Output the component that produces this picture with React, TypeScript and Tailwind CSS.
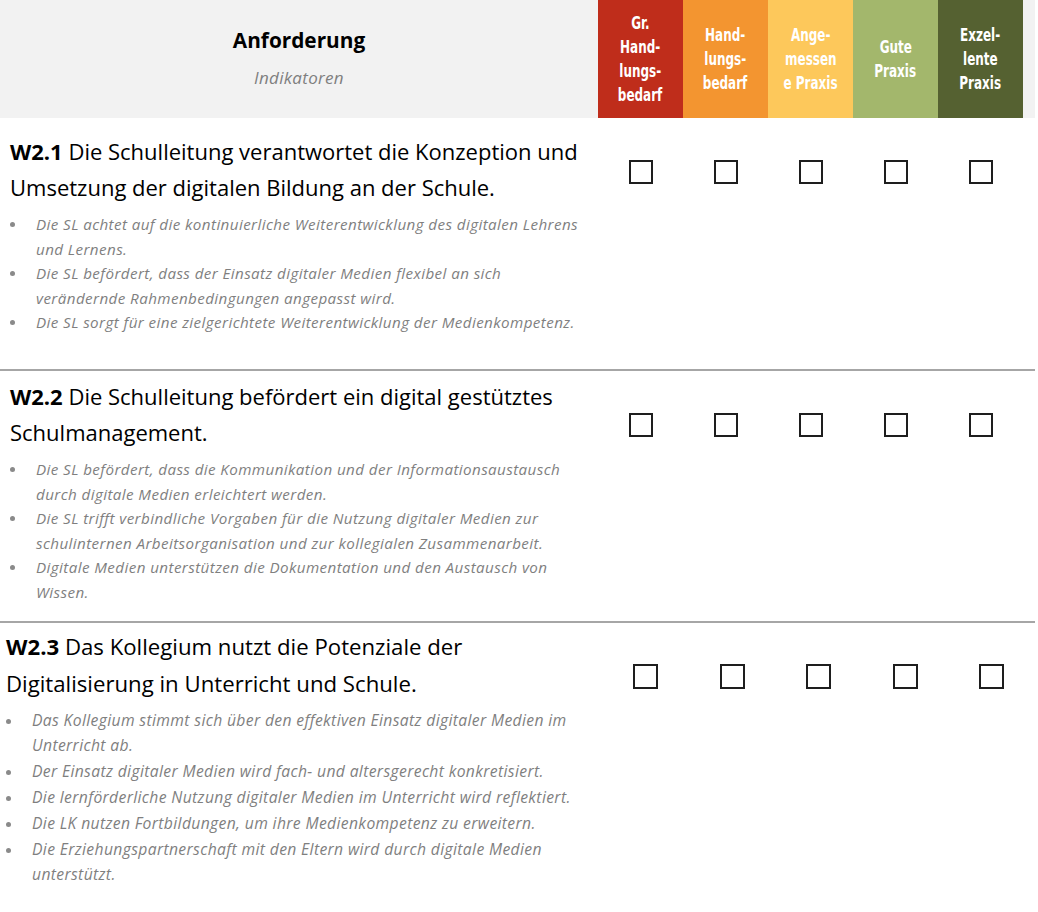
import React from "react";

type Row = {
  id: string;
  title: string[];
  items: string[][];
  variant: "a" | "b";
};

const ratings = [
  { lines: ["Gr.", "Hand-", "lungs-", "bedarf"], bg: "bg-[#bf2d1b]" },
  { lines: ["Hand-", "lungs-", "bedarf"], bg: "bg-[#f39530]" },
  { lines: ["Ange-", "messen", "e Praxis"], bg: "bg-[#fdc85b]" },
  { lines: ["Gute", "Praxis"], bg: "bg-[#a3b76c]" },
  { lines: ["Exzel-", "lente", "Praxis"], bg: "bg-[#556131]" },
];

const rows: Row[] = [
  {
    id: "W2.1",
    variant: "a",
    title: [
      "Die Schulleitung verantwortet die Konzeption und",
      "Umsetzung der digitalen Bildung an der Schule.",
    ],
    items: [
      [
        "Die SL achtet auf die kontinuierliche Weiterentwicklung des digitalen Lehrens",
        "und Lernens.",
      ],
      [
        "Die SL befördert, dass der Einsatz digitaler Medien flexibel an sich",
        "verändernde Rahmenbedingungen angepasst wird.",
      ],
      ["Die SL sorgt für eine zielgerichtete Weiterentwicklung der Medienkompetenz."],
    ],
  },
  {
    id: "W2.2",
    variant: "a",
    title: ["Die Schulleitung befördert ein digital gestütztes", "Schulmanagement."],
    items: [
      [
        "Die SL befördert, dass die Kommunikation und der Informationsaustausch",
        "durch digitale Medien erleichtert werden.",
      ],
      [
        "Die SL trifft verbindliche Vorgaben für die Nutzung digitaler Medien zur",
        "schulinternen Arbeitsorganisation und zur kollegialen Zusammenarbeit.",
      ],
      [
        "Digitale Medien unterstützen die Dokumentation und den Austausch von",
        "Wissen.",
      ],
    ],
  },
  {
    id: "W2.3",
    variant: "b",
    title: [
      "Das Kollegium nutzt die Potenziale der",
      "Digitalisierung in Unterricht und Schule.",
    ],
    items: [
      [
        "Das Kollegium stimmt sich über den effektiven Einsatz digitaler Medien im",
        "Unterricht ab.",
      ],
      ["Der Einsatz digitaler Medien wird fach- und altersgerecht konkretisiert."],
      ["Die lernförderliche Nutzung digitaler Medien im Unterricht wird reflektiert."],
      ["Die LK nutzen Fortbildungen, um ihre Medienkompetenz zu erweitern."],
      [
        "Die Erziehungspartnerschaft mit den Eltern wird durch digitale Medien",
        "unterstützt.",
      ],
    ],
  },
];

const Checkbox = ({ big }: { big?: boolean }) => (
  <span
    className={
      big
        ? "block w-[25px] h-[25px] border-2 border-[#1e1e1e] bg-white"
        : "block w-[24px] h-[24px] border-2 border-[#1e1e1e] bg-white"
    }
  />
);

const CriterionRow = ({ row, first }: { row: Row; first: boolean }) => {
  const b = row.variant === "b";
  return (
    <div className={first ? "flex" : "flex border-t-2 border-[#a6a6a6]"}>
      <div
        className={
          b
            ? "w-[598px] pl-[6px] pt-[5px] pb-[20px]"
            : first
            ? "w-[598px] pl-[10px] pt-[15px] pb-[34px]"
            : "w-[598px] pl-[10px] pt-[7px] pb-[16px]"
        }
      >
        <p
          className={
            b
              ? "text-[22.2px] leading-[37px] text-black whitespace-nowrap"
              : "text-[22px] leading-[36px] text-black whitespace-nowrap"
          }
        >
          <span className="font-bold">{row.id}</span> {row.title[0]}
          <br />
          {row.title[1]}
        </p>
        <ul className={b ? "mt-[6px]" : "mt-[7px]"}>
          {row.items.map((item, i) => (
            <li
              key={i}
              className={
                b
                  ? "flex text-[15.7px] leading-[25.8px] tracking-[0.35px] italic text-[#7f7f7f] whitespace-nowrap"
                  : "flex text-[15.2px] leading-[24.6px] tracking-[0.4px] italic text-[#7f7f7f] whitespace-nowrap"
              }
            >
              <span
                className={
                  b
                    ? "w-[26px] shrink-0 flex pt-[11px]"
                    : "w-[26px] shrink-0 flex pt-[10px]"
                }
              >
                <span className="block w-[5px] h-[5px] rounded-full bg-[#8a8a8a]" />
              </span>
              <span>
                {item.map((line, j) => (
                  <React.Fragment key={j}>
                    {j > 0 && <br />}
                    {line}
                  </React.Fragment>
                ))}
              </span>
            </li>
          ))}
        </ul>
      </div>
      <div className={b ? "flex pl-[31px] pt-[41px]" : "flex pt-[42px]"}>
        {ratings.map((r, i) => (
          <div
            key={i}
            className={b ? "w-[86.5px] flex justify-center" : "w-[85px] flex justify-center"}
          >
            <Checkbox big={b} />
          </div>
        ))}
      </div>
    </div>
  );
};

export default function App() {
  return (
    <div className="w-[1038px] min-h-[912px] bg-white font-['Open_Sans',sans-serif]">
      <div className="w-[1035px]">
        <div className="flex h-[118px] bg-[#f2f2f2]">
          <div className="w-[598px] flex flex-col items-center pt-[26px]">
            <h1 className="text-[20.8px] leading-[28px] font-bold text-black">Anforderung</h1>
            <p className="mt-[13px] text-[17px] leading-[22px] tracking-[0.3px] italic text-[#7f7f7f]">
              Indikatoren
            </p>
          </div>
          {ratings.map((r, i) => (
            <div
              key={i}
              className={`w-[85px] h-full flex flex-col items-center justify-center ${r.bg} font-['DejaVu_Sans_Condensed',sans-serif] font-bold text-white text-[18px] leading-[24px] text-center`}
            >
              {r.lines.map((l) => (
                <span key={l} className="block scale-x-[0.74] whitespace-nowrap">
                  {l}
                </span>
              ))}
            </div>
          ))}
        </div>
        {rows.map((row, i) => (
          <CriterionRow key={row.id} row={row} first={i === 0} />
        ))}
      </div>
    </div>
  );
}
